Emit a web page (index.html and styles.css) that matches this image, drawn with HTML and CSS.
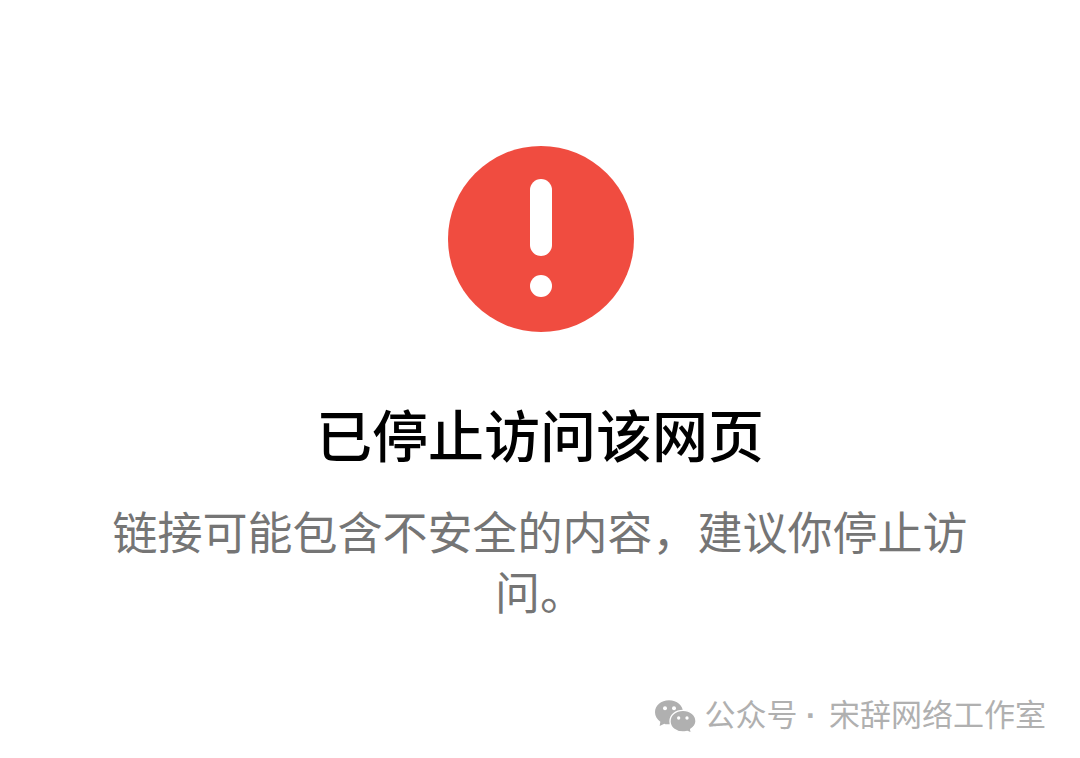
FILE: index.html
```html
<!DOCTYPE html>
<html lang="zh-CN">
<head>
  <meta charset="UTF-8">
  <meta name="viewport" content="width=device-width, initial-scale=1.0">
  <title>已停止访问该网页</title>
  <link rel="stylesheet" href="styles.css">
</head>
<body>
  <main class="warning">
    <svg class="warning-icon" viewBox="0 0 188 188" aria-hidden="true">
      <circle cx="95" cy="94" r="93" fill="#f04c40"/>
      <rect x="84" y="34" width="22" height="77" rx="11" fill="#fff"/>
      <circle cx="95" cy="141" r="11" fill="#fff"/>
    </svg>
    <h1>已停止访问该网页</h1>
    <p class="warning-text">链接可能包含不安全的内容，建议你停止访问。</p>
  </main>
  <footer class="account">
    <svg class="account-icon" viewBox="0 0 123 99" aria-hidden="true">
      <path fill="#b0b0b0" d="M42 1C18 1 0 17 0 37c0 11 6 21 16 28l-2 13 14-7c5 2 9 2 14 2 24 0 42-16 42-36S66 1 42 1Z"/>
      <circle cx="30" cy="25" r="6" fill="#fff"/>
      <circle cx="57" cy="25" r="6" fill="#fff"/>
      <path fill="#b0b0b0" stroke="#fff" stroke-width="4" d="M84 31c-22 0-39 14-39 33s17 32 39 32c5 0 9-1 13-2l12 5-2-11c10-6 16-14 16-24 0-19-17-33-39-33Z"/>
      <circle cx="71" cy="54" r="5" fill="#fff"/>
      <circle cx="96" cy="54" r="5" fill="#fff"/>
    </svg>
    <span>公众号 <span class="dot">·</span> 宋辞网络工作室</span>
  </footer>
</body>
</html>
```
FILE: styles.css
```css
* {
  box-sizing: border-box;
}
body {
  margin: 0;
  min-height: 100vh;
  display: flex;
  flex-direction: column;
  justify-content: space-between;
  background-color: #fff;
  font-family: "Noto Sans CJK SC", sans-serif;
}
.warning {
  padding: 145px 108px 0;
  display: flex;
  flex-direction: column;
  align-items: center;
  text-align: center;
}
.warning-icon {
  width: 188px;
  height: 188px;
}
h1 {
  margin: 60px 0 0;
  font-size: 56px;
  line-height: 80px;
  font-weight: 500;
  color: #000;
}
.warning-text {
  margin: 28px 0 0;
  font-size: 45px;
  line-height: 60px;
  color: #757575;
}
.account {
  padding: 0 34px 20px;
  display: flex;
  align-items: center;
  justify-content: flex-end;
  gap: 8px;
  font-family: "Liberation Sans", "Noto Sans CJK SC", sans-serif;
  font-size: 31px;
  line-height: 44px;
  color: #b0b0b0;
}
.account-icon {
  width: 41px;
  height: 33px;
}
.dot {
  margin-right: 4px;
  font-weight: bold;
}
```
